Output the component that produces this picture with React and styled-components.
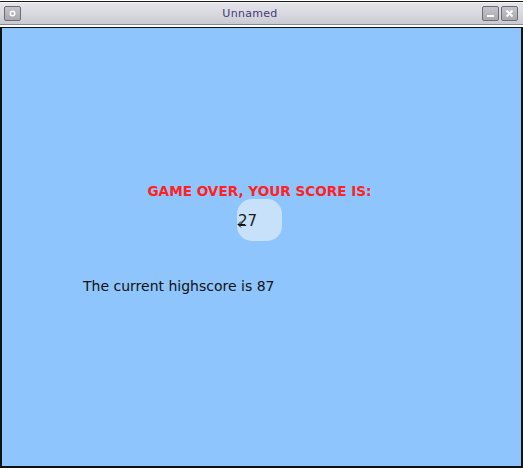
import React from "react";
import styled, { createGlobalStyle } from "styled-components";

const Global = createGlobalStyle`
  html, body { margin: 0; padding: 0; background: #ffffff; }
  body { font-family: "DejaVu Sans", "Liberation Sans", sans-serif; }
`;

const Screen = styled.div`
  width: 523px;
  height: 468px;
  display: flex;
  flex-direction: column;
  box-sizing: border-box;
  padding-top: 1px;
`;

const Window = styled.div`
  flex: 1;
  display: flex;
  flex-direction: column;
  border-top: 1px solid #1a1a1a;
`;

const TitleBar = styled.div`
  height: 21px;
  display: flex;
  align-items: center;
  padding: 0 5px 0 4px;
  gap: 2px;
  background: linear-gradient(#e4e4ea, #d6d6de 60%, #c9c9d1);
  border-bottom: 1px solid #8a8a92;
  border-top: 1px solid #f4f4f6;
`;

const Title = styled.div`
  flex: 1;
  text-align: center;
  font-size: 11px;
  color: #45397e;
  letter-spacing: 0.3px;
  padding-right: 3px;
`;

const WinButton = styled.div`
  width: 17px;
  height: 15px;
  box-sizing: border-box;
  border: 1px solid #6c6c72;
  border-radius: 2px;
  background: linear-gradient(#c4c4ca, #a8a8ae);
  display: flex;
  align-items: center;
  justify-content: center;
`;

const Separator = styled.div`
  height: 2px;
  background: #ffffff;
  border-bottom: 1px solid #111;
`;

const Content = styled.div`
  flex: 1;
  background: #8ec5fc;
  border-left: 2px solid #111;
  border-right: 2px solid #111;
  border-bottom: 2px solid #111;
  display: flex;
  flex-direction: column;
  padding-top: 155px;
`;

const Heading = styled.div`
  text-align: center;
  color: #ff2222;
  font-weight: bold;
  font-size: 13.6px;
  line-height: 16px;
  margin-right: 4px;
`;

const ScoreRow = styled.div`
  display: flex;
  justify-content: center;
  margin-top: 0;
  padding-right: 4px;
`;

const Blob = styled.div`
  position: relative;
  width: 45px;
  height: 42px;
  border-radius: 15px;
  background: #c8e1fb;
  font-size: 15px;
  color: #1a1a1a;
  padding: 14px 0 0 1px;
  box-sizing: border-box;
  line-height: 17px;
`;

const Cursor = styled.svg`
  position: absolute;
  left: 0;
  top: 21px;
`;

const Highscore = styled.div`
  margin-top: 37px;
  padding-left: 81px;
  font-size: 14px;
  color: #111;
  line-height: 17px;
`;

export default function App() {
  return (
    <>
      <Global />
      <Screen>
        <Window>
          <TitleBar>
            <WinButton>
              <svg width="7" height="7" viewBox="0 0 7 7">
                <circle cx="3.5" cy="3.5" r="2.3" fill="none" stroke="#fff" strokeWidth="1.4" />
              </svg>
            </WinButton>
            <Title>Unnamed</Title>
            <WinButton>
              <svg width="9" height="9" viewBox="0 0 9 9">
                <rect x="1" y="6" width="7" height="2" fill="#fff" />
              </svg>
            </WinButton>
            <WinButton>
              <svg width="9" height="9" viewBox="0 0 9 9">
                <path d="M1.5 1.5 L7.5 7.5 M7.5 1.5 L1.5 7.5" stroke="#fff" strokeWidth="2" />
              </svg>
            </WinButton>
          </TitleBar>
          <Separator />
          <Content>
            <Heading>GAME OVER, YOUR SCORE IS:</Heading>
            <ScoreRow>
              <Blob>
                27
                <Cursor width="9" height="9" viewBox="0 0 9 9">
                  <path d="M8 4.5 H1 M4 1.5 L1 4.5 L4 7.5" fill="none" stroke="#111" strokeWidth="1" />
                </Cursor>
              </Blob>
            </ScoreRow>
            <Highscore>The current highscore is 87</Highscore>
          </Content>
        </Window>
      </Screen>
    </>
  );
}
